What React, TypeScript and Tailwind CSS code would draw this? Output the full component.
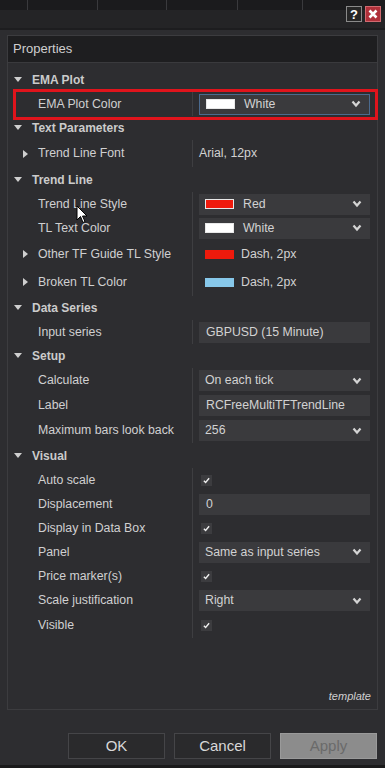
import React from "react";

type Value =
  | { t: "select"; text: string; swatch?: string; focus?: boolean }
  | { t: "box"; text: string }
  | { t: "plain"; text: string }
  | { t: "swatch"; color: string; text: string }
  | { t: "check" };

type Row =
  | { kind: "cat"; label: string; h: number }
  | { kind: "item"; label: string; h: number; expand?: boolean; value: Value; marked?: boolean };

const rows: Row[] = [
  { kind: "cat", label: "EMA Plot", h: 24 },
  { kind: "item", label: "EMA Plot Color", h: 24, marked: true, value: { t: "select", text: "White", swatch: "#ffffff", focus: true } },
  { kind: "cat", label: "Text Parameters", h: 24 },
  { kind: "item", label: "Trend Line Font", h: 27, expand: true, value: { t: "plain", text: "Arial, 12px" } },
  { kind: "cat", label: "Trend Line", h: 25 },
  { kind: "item", label: "Trend Line Style", h: 24, value: { t: "select", text: "Red", swatch: "#f01a0c" } },
  { kind: "item", label: "TL Text Color", h: 24, value: { t: "select", text: "White", swatch: "#ffffff" } },
  { kind: "item", label: "Other TF Guide TL Style", h: 28, expand: true, value: { t: "swatch", color: "#ee1a0c", text: "Dash, 2px" } },
  { kind: "item", label: "Broken TL Color", h: 28, expand: true, value: { t: "swatch", color: "#87c8ea", text: "Dash, 2px" } },
  { kind: "cat", label: "Data Series", h: 24 },
  { kind: "item", label: "Input series", h: 24, value: { t: "box", text: "GBPUSD (15 Minute)" } },
  { kind: "cat", label: "Setup", h: 24 },
  { kind: "item", label: "Calculate", h: 25, value: { t: "select", text: "On each tick" } },
  { kind: "item", label: "Label", h: 25, value: { t: "box", text: "RCFreeMultiTFTrendLine" } },
  { kind: "item", label: "Maximum bars look back", h: 25, value: { t: "select", text: "256" } },
  { kind: "cat", label: "Visual", h: 25 },
  { kind: "item", label: "Auto scale", h: 24, value: { t: "check" } },
  { kind: "item", label: "Displacement", h: 24, value: { t: "box", text: "0" } },
  { kind: "item", label: "Display in Data Box", h: 24, value: { t: "check" } },
  { kind: "item", label: "Panel", h: 24, value: { t: "select", text: "Same as input series" } },
  { kind: "item", label: "Price marker(s)", h: 24, value: { t: "check" } },
  { kind: "item", label: "Scale justification", h: 25, value: { t: "select", text: "Right" } },
  { kind: "item", label: "Visible", h: 25, value: { t: "check" } },
];

const Chevron = () => (
  <svg viewBox="0 0 10 8" className="w-[10px] h-[8px] text-[#d4d4d4]" fill="none" stroke="currentColor" strokeWidth="2.2">
    <path d="M1.5 1.5 L5 5.5 L8.5 1.5" />
  </svg>
);

const ValueCell = ({ v }: { v: Value }) => {
  if (v.t === "select") {
    return (
      <div
        className={`flex items-center h-[21px] w-full bg-[#3a3a3d] pl-[6px] pr-[8px] ${
          v.focus ? "border border-[#4b6a8e]" : ""
        }`}
      >
        {v.swatch && <div className="w-[29px] h-[10px] mr-[9px] border border-[#e8e8e8]" style={{ background: v.swatch }} />}
        <span className="flex-1 text-[#d2d2d2]">{v.text}</span>
        <Chevron />
      </div>
    );
  }
  if (v.t === "box") {
    return (
      <div className="flex items-center h-[21px] w-full bg-[#3a3a3d] pl-[7px]">
        <span className="text-[#d2d2d2]">{v.text}</span>
      </div>
    );
  }
  if (v.t === "plain") {
    return <span className="text-[#d2d2d2]">{v.text}</span>;
  }
  if (v.t === "swatch") {
    return (
      <div className="flex items-center pl-[6px]">
        <div className="w-[29px] h-[9px] mr-[7px]" style={{ background: v.color }} />
        <span className="text-[#d2d2d2]">{v.text}</span>
      </div>
    );
  }
  return (
    <div className="ml-[2px] w-[11px] h-[11px] bg-[#3c3c3f] flex items-center justify-center">
      <svg viewBox="0 0 8 8" className="w-[7px] h-[7px]" fill="none" stroke="#eeeeee" strokeWidth="1.6">
        <path d="M1 4.2 L3 6.2 L7 1.5" />
      </svg>
    </div>
  );
};

const PropRow = ({ row }: { row: Row }) => {
  if (row.kind === "cat") {
    return (
      <div className="flex items-center" style={{ height: row.h }}>
        <svg viewBox="0 0 8 6" className="w-[8px] h-[6px] ml-[6px] mr-[10px]" fill="#cfcfcf">
          <path d="M0 0 H8 L4 5 Z" />
        </svg>
        <span className="font-bold text-[#cbcbcb] text-[12px]">{row.label}</span>
      </div>
    );
  }
  return (
    <div className="relative flex items-center" style={{ height: row.h }}>
      <div className="w-[184px] flex items-center h-full">
        <div className="w-[30px] flex justify-end pr-[10px]">
          {row.expand && (
            <svg viewBox="0 0 5 8" className="w-[5px] h-[8px]" fill="#cfcfcf">
              <path d="M0 0 L5 4 L0 8 Z" />
            </svg>
          )}
        </div>
        <span className="text-[#d0d0d0] whitespace-nowrap">{row.label}</span>
      </div>
      <div className="flex-1 h-full flex items-center border-l border-[#3e3e41] pl-[6px] pr-[7px]">
        <ValueCell v={row.value} />
      </div>
      {row.marked && (
        <div className="absolute left-[5px] -right-[1px] -top-[3px] -bottom-[4px] border-[3px] border-[#e0141c] pointer-events-none" />
      )}
    </div>
  );
};

const App = () => {
  const seps = [27, 97, 166, 237, 302];
  return (
    <div className="relative w-[385px] h-[768px] overflow-hidden bg-[#2d2d30] font-['Liberation_Sans',Arial,sans-serif] text-[12.3px]">
      {/* title bar */}
      <div className="relative h-[30px] bg-[#242426] border-b-2 border-[#1d1d1f]">
        <div className="h-[10px] bg-[#1b1b1d] flex">
          {seps.map((x, i) => (
            <div key={i} className="w-px h-full bg-[#3a3a3d]" style={{ marginLeft: i === 0 ? x : x - seps[i - 1] - 1 }} />
          ))}
        </div>
        <div className="absolute top-[6px] right-[4px] flex gap-[3px]">
          <div className="w-[16px] h-[16px] bg-[#262626] border border-[#8a8a8a] flex items-center justify-center text-white font-bold text-[13px] leading-none">
            ?
          </div>
          <div className="w-[16px] h-[16px] bg-[#b0303a] border border-[#d06a70] flex items-center justify-center">
            <svg viewBox="0 0 10 10" className="w-[10px] h-[10px]" stroke="#ffffff" strokeWidth="2.6">
              <path d="M1.5 1.5 L8.5 8.5 M8.5 1.5 L1.5 8.5" />
            </svg>
          </div>
        </div>
      </div>

      {/* properties panel */}
      <div className="mx-[7px] mt-[5px] h-[675px] border border-[#3c3c3f] flex flex-col">
        <div className="h-[27px] bg-[#1e1e20] flex items-center pl-[5px] text-[13px] text-[#cfcfcf] border-b border-[#3a3a3d]">
          Properties
        </div>
        <div className="pt-[5px]">
          {rows.map((r, i) => (
            <PropRow key={i} row={r} />
          ))}
        </div>
        <div className="flex-1 flex items-end justify-end pr-[6px] pb-[5px]">
          <span className="italic text-[11px] text-[#d0d0d0]">template</span>
        </div>
      </div>

      {/* buttons */}
      <div className="flex justify-end gap-[9px] pr-[8px] mt-[23px]">
        <button className="w-[97px] h-[26px] bg-[#2a2a2c] border border-[#454548] text-[#d8d8d8] text-[15px]">OK</button>
        <button className="w-[97px] h-[26px] bg-[#2a2a2c] border border-[#454548] text-[#d8d8d8] text-[15px]">Cancel</button>
        <button className="w-[97px] h-[26px] bg-[#8c8c8c] border border-[#9a9a9a] text-[#6a6a6a] text-[15px]">Apply</button>
      </div>
      <div className="absolute left-0 right-0 bottom-0 h-[3px] bg-[#1a1a1b]" />

      {/* mouse cursor */}
      <svg viewBox="0 0 12 19" className="absolute left-[76px] top-[205px] w-[12px] h-[19px]">
        <path d="M1 1 L1 15 L4.5 11.5 L7 17.5 L9 16.5 L6.5 11 L11 11 Z" fill="#ffffff" stroke="#000000" strokeWidth="1" />
      </svg>
    </div>
  );
};

export default App;
